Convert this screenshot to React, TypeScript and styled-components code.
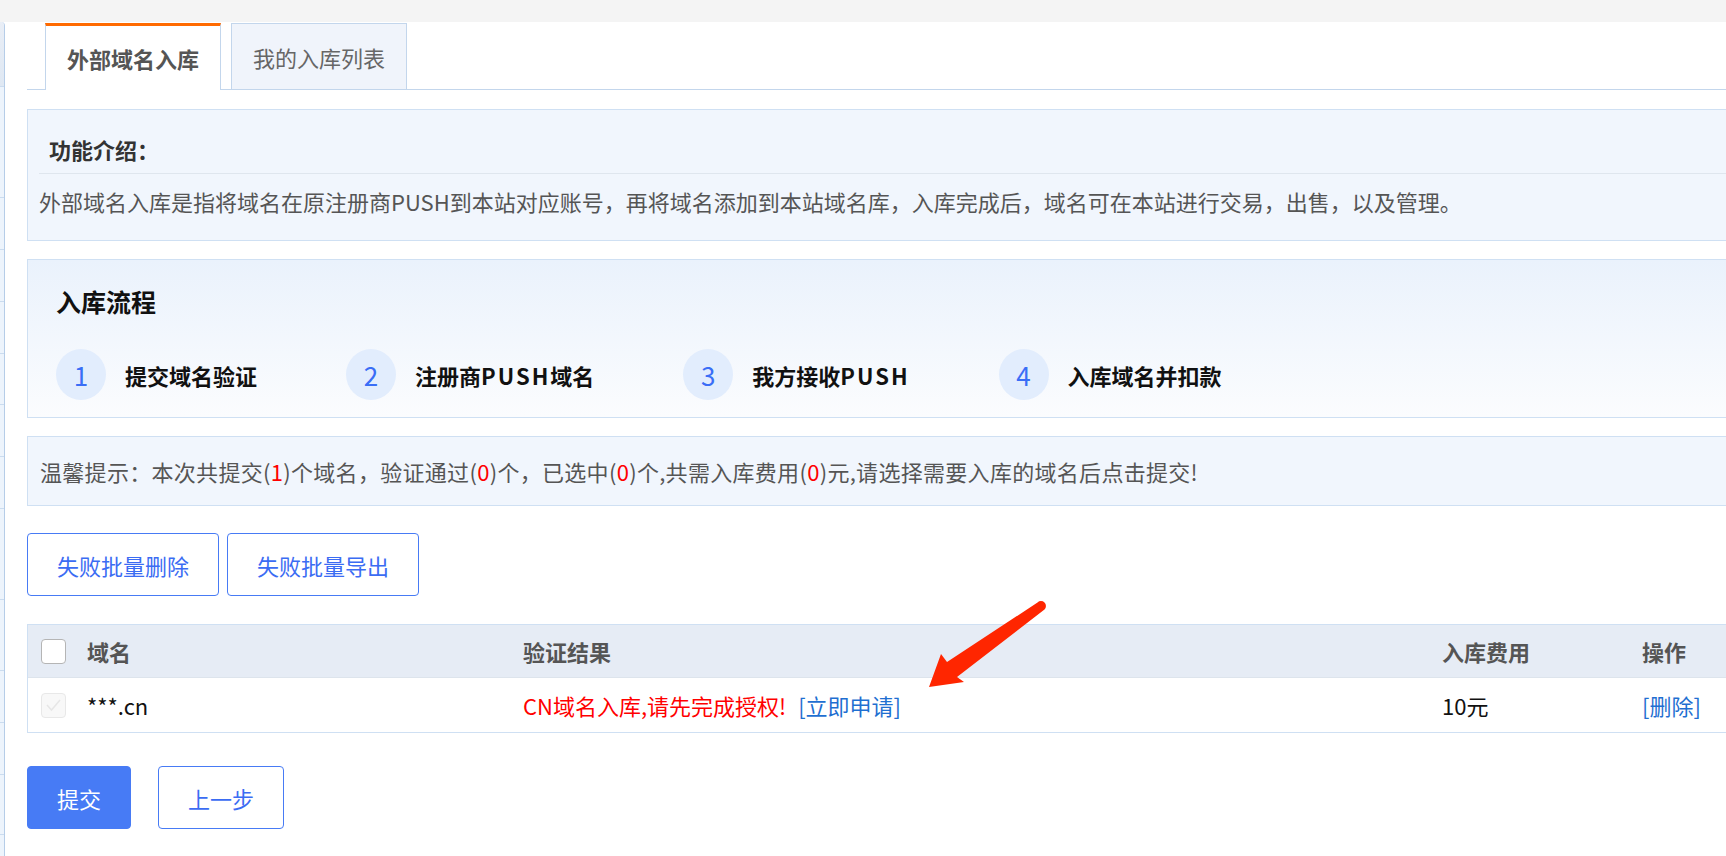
import React from "react";
import styled, { createGlobalStyle } from "styled-components";

const colors = {
  line: "#cfe0f3",
  tabLine: "#c3d6ec",
  panel: "#f1f6fd",
  blue: "#477bf5",
  blueText: "#3b6cf3",
  link: "#1f6fd1",
  red: "#ff0000",
  orange: "#ff6a00",
};

const GlobalStyle = createGlobalStyle`
  html, body {
    margin: 0;
    padding: 0;
    overflow: hidden;
    background: #fff;
  }
  body {
    font-family: "Noto Sans CJK SC", "Noto Sans", sans-serif;
    font-size: 22px;
    color: #555;
  }
`;

const sideItems = [65, 111, 52, 52, 52, 51, 52, 52, 91, 71, 52, 52, 60];

// latin part of a label gets a bit of extra spacing, like the original bold face
const steps = [
  ["提交域名验证"],
  ["注册商", "PUSH", "域名"],
  ["我方接收", "PUSH"],
  ["入库域名并扣款"],
];

const Page = () => {
  return (
    <Wrap>
      <GlobalStyle />
      <TopBar />
      <Body>
        <Sidebar>
          {sideItems.map((h, i) => (
            <SideItem key={i} $h={h} $head={i === 0} />
          ))}
        </Sidebar>
        <Main>
          <TabBar>
            <Tab $active>外部域名入库</Tab>
            <Tab>我的入库列表</Tab>
          </TabBar>

          <InfoBox>
            <InfoTitle>功能介绍：</InfoTitle>
            <InfoText>
              外部域名入库是指将域名在原注册商PUSH到本站对应账号，再将域名添加到本站域名库，入库完成后，域名可在本站进行交易，出售，以及管理。
            </InfoText>
          </InfoBox>

          <ProcessBox>
            <ProcessTitle>入库流程</ProcessTitle>
            <Steps>
              {steps.map((parts, i) => (
                <Step key={i}>
                  <StepNum>{i + 1}</StepNum>
                  <StepLabel>
                    {parts.map((p) => (p === "PUSH" ? <Latin key={p}>{p}</Latin> : p))}
                  </StepLabel>
                </Step>
              ))}
            </Steps>
          </ProcessBox>

          <TipBox>
            温馨提示：本次共提交(<Red>1</Red>)个域名，验证通过(<Red>0</Red>)个，已选中(<Red>0</Red>)个,共需入库费用(<Red>0</Red>)元,请选择需要入库的域名后点击提交!
          </TipBox>

          <ButtonRow $gap={8}>
            <Button>失败批量删除</Button>
            <Button>失败批量导出</Button>
          </ButtonRow>

          <Table>
            <HeadRow>
              <Cell>
                <Check />
              </Cell>
              <Cell>域名</Cell>
              <Cell>验证结果</Cell>
              <Cell>入库费用</Cell>
              <Cell>操作</Cell>
            </HeadRow>
            <DataRow>
              <Cell>
                <Check $disabled>
                  <svg width="17" height="14" viewBox="0 0 17 14">
                    <path d="M2 7l4.5 5L15 2" fill="none" stroke="#e6e6e6" strokeWidth="1.5" />
                  </svg>
                </Check>
              </Cell>
              <Cell $dark>***.cn</Cell>
              <Cell>
                <Red>CN域名入库,请先完成授权!</Red>
                <Link>[立即申请]</Link>
              </Cell>
              <Cell $dark>10元</Cell>
              <Cell>
                <Link $flush>[删除]</Link>
              </Cell>
            </DataRow>
          </Table>

          <ButtonRow $gap={27} $top={33}>
            <Button $primary>提交</Button>
            <Button>上一步</Button>
          </ButtonRow>
        </Main>
      </Body>

      <Arrow viewBox="0 0 130 100" width="130" height="100">
        {/* annotation arrow drawn over the table */}
        <path
          d="M117.5 6.5 L27 66 L21 58 L9 91 L44 86 L37 81 L124.5 13.5 A4.5 4.5 0 0 0 117.5 6.5 Z"
          fill="#ff2600"
        />
      </Arrow>
    </Wrap>
  );
};

export default function App() {
  return <Page />;
}

const Wrap = styled.div`
  position: relative;
  width: 1726px;
  min-height: 856px;
`;

const TopBar = styled.div`
  height: 22px;
  background: #f4f4f4;
`;

const Body = styled.div`
  display: flex;
  align-items: flex-start;
`;

const Sidebar = styled.div`
  width: 4px;
  flex: none;
  border-right: 1px solid #b6cde8;
  border-top-right-radius: 4px;
  background: #edf4fc;
  height: 834px;
  overflow: hidden;
`;

const SideItem = styled.div<{ $h: number; $head?: boolean }>`
  height: ${(p) => p.$h - 1}px;
  border-bottom: 1px solid #cbdcef;
  background: ${(p) => (p.$head ? "linear-gradient(#e9eef6, #dfe8f3)" : "transparent")};
`;

const Main = styled.div`
  width: 1720px;
  flex: none;
  padding: 1px 0 0 22px;
`;

const TabBar = styled.div`
  display: flex;
  align-items: flex-end;
  gap: 10px;
  padding-left: 18px;
  border-bottom: 1px solid ${colors.tabLine};
  height: 66px;
`;

const Tab = styled.div<{ $active?: boolean }>`
  box-sizing: border-box;
  height: ${(p) => (p.$active ? 67 : 66)}px;
  margin-bottom: ${(p) => (p.$active ? -1 : 0)}px;
  padding: 0 21px;
  display: flex;
  align-items: center;
  font-size: 22px;
  font-weight: ${(p) => (p.$active ? 700 : 400)};
  color: ${(p) => (p.$active ? "#555" : "#666")};
  background: ${(p) => (p.$active ? "#fff" : "#f0f4fb")};
  border: 1px solid ${colors.tabLine};
  border-bottom: none;
  border-top: ${(p) => (p.$active ? `3px solid ${colors.orange}` : `1px solid ${colors.tabLine}`)};
`;

const InfoBox = styled.div`
  margin-top: 19px;
  border: 1px solid ${colors.line};
  background: ${colors.panel};
  padding-left: 11px;
`;

const InfoTitle = styled.div`
  padding: 23px 0 0 10px;
  margin-bottom: 8px;
  line-height: 32px;
  font-weight: 700;
  color: #333;
`;

const InfoText = styled.div`
  border-top: 1px solid #dfe6ee;
  line-height: 46px;
  padding: 4px 0 16px;
  color: #555;
  white-space: nowrap;
`;

const ProcessBox = styled.div`
  margin-top: 18px;
  border: 1px solid ${colors.line};
  background: linear-gradient(#eaf2fc, #fbfcfe);
  padding: 23px 28px 17px;
`;

const ProcessTitle = styled.div`
  font-size: 25px;
  line-height: 36px;
  font-weight: 700;
  color: #111;
`;

const Steps = styled.div`
  display: flex;
  gap: 89px;
  margin-top: 30px;
`;

const Step = styled.div`
  display: flex;
  align-items: center;
  gap: 19px;
`;

const StepNum = styled.div`
  width: 50px;
  height: 51px;
  border-radius: 50%;
  background: #e2edfd;
  color: #3a6ef6;
  font-size: 26px;
  line-height: 51px;
  text-align: center;
`;

const StepLabel = styled.div`
  font-weight: 700;
  color: #111;
  white-space: nowrap;
`;

const Latin = styled.span`
  letter-spacing: 2px;
`;

const TipBox = styled.div`
  margin-top: 18px;
  border: 1px solid ${colors.line};
  background: ${colors.panel};
  height: 68px;
  line-height: 68px;
  padding: 0 12px;
  color: #555;
  letter-spacing: 0.3px;
  white-space: nowrap;
`;

const Red = styled.span`
  color: ${colors.red};
`;

const ButtonRow = styled.div<{ $gap: number; $top?: number }>`
  display: flex;
  gap: ${(p) => p.$gap}px;
  margin-top: ${(p) => p.$top ?? 27}px;
`;

const Button = styled.button<{ $primary?: boolean }>`
  height: 63px;
  padding: 0 29px;
  border-radius: 4px;
  border: 1px solid ${colors.blue};
  background: ${(p) => (p.$primary ? colors.blue : "#fff")};
  color: ${(p) => (p.$primary ? "#fff" : colors.blueText)};
  font-family: inherit;
  font-size: 22px;
  cursor: pointer;
`;

const Table = styled.div`
  margin-top: 28px;
  border: 1px solid ${colors.line};
`;

const gridCols = "59px 436px 919px 200px 1fr";

const HeadRow = styled.div`
  display: grid;
  grid-template-columns: ${gridCols};
  height: 52px;
  background: #e6ecf5;
  font-weight: 700;
  color: #555;
`;

const DataRow = styled.div`
  display: grid;
  grid-template-columns: ${gridCols};
  height: 54px;
  border-top: 1px solid #dde4ec;
  background: #fff;
`;

const Cell = styled.div<{ $dark?: boolean }>`
  display: flex;
  align-items: center;
  white-space: nowrap;
  color: ${(p) => (p.$dark ? "#111" : "inherit")};
  &:first-child {
    padding-left: 13px;
  }
`;

const Check = styled.span<{ $disabled?: boolean }>`
  box-sizing: border-box;
  width: 25px;
  height: 25px;
  border-radius: 4px;
  border: 1px solid ${(p) => (p.$disabled ? "#e8e8e8" : "#b5b5b5")};
  background: ${(p) => (p.$disabled ? "#f8f8f8" : "#fff")};
  display: flex;
  align-items: center;
  justify-content: center;
`;

const Link = styled.a<{ $flush?: boolean }>`
  color: ${colors.link};
  margin-left: ${(p) => (p.$flush ? 0 : 12)}px;
  cursor: pointer;
`;

const Arrow = styled.svg`
  position: absolute;
  left: 920px;
  top: 596px;
`;
